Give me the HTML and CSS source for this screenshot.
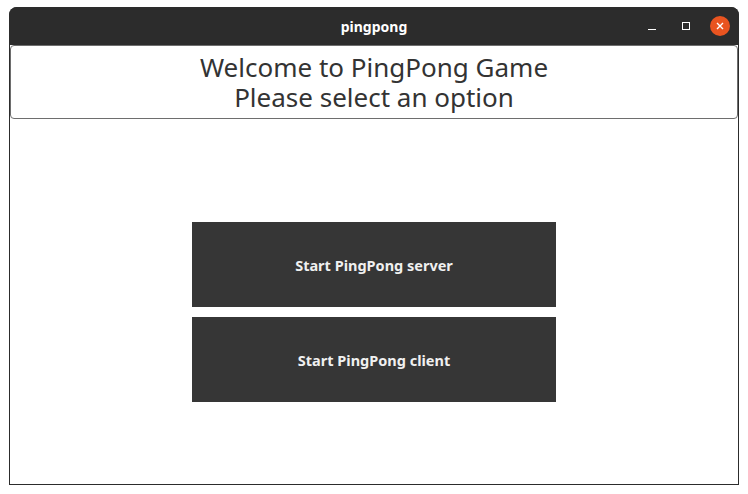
FILE: index.html
```html
<!DOCTYPE html>
<html>
<head>
<meta charset="utf-8">
<link rel="stylesheet" href="styles.css">
</head>
<body>
<div class="window">
  <div class="titlebar">
    <span class="title">pingpong</span>
    <div class="controls">
      <span class="ctl min"><svg width="10" height="10" viewBox="0 0 10 10"><line x1="1" y1="8.5" x2="9" y2="8.5" stroke="#fff" stroke-width="1"/></svg></span>
      <span class="ctl max"><svg width="10" height="10" viewBox="0 0 10 10"><rect x="1.5" y="1.5" width="7" height="7" fill="none" stroke="#fff" stroke-width="1"/></svg></span>
      <span class="ctl close"><svg width="10" height="10" viewBox="0 0 10 10"><path d="M2 2 L8 8 M8 2 L2 8" stroke="#fff" stroke-width="1.4"/></svg></span>
    </div>
  </div>
  <div class="content">
    <div class="header">
      <div class="line">Welcome to PingPong Game</div>
      <div class="line">Please select an option</div>
    </div>
    <div class="buttons">
      <button class="btn">Start PingPong server</button>
      <button class="btn">Start PingPong client</button>
    </div>
  </div>
</div>
</body>
</html>
```
FILE: styles.css
```css
html, body {
  margin: 0;
  padding: 0;
  background: #ffffff;
}
body {
  padding: 7px 9px 0 9px;
  font-family: "Noto Sans", "Open Sans", sans-serif;
}
.window {
  width: 730px;
  height: 478px;
  box-sizing: border-box;
  display: flex;
  flex-direction: column;
  border-radius: 8px 8px 0 0;
  overflow: hidden;
  background: #2c2c2c;
}
.titlebar {
  height: 38px;
  flex: none;
  position: relative;
  display: flex;
  align-items: center;
  justify-content: center;
  background: #2c2c2c;
}
.title {
  color: #ffffff;
  font-weight: bold;
  font-size: 14px;
}
.controls {
  position: absolute;
  right: 9px;
  top: 0;
  height: 38px;
  display: flex;
  align-items: center;
  gap: 14px;
}
.ctl {
  width: 20px;
  height: 20px;
  display: flex;
  align-items: center;
  justify-content: center;
}
.close {
  background: #e95420;
  border-radius: 50%;
}
.content {
  flex: 1;
  background: #ffffff;
  margin: 0 1px 1px 1px;
  display: flex;
  flex-direction: column;
}
.header {
  height: 74px;
  box-sizing: border-box;
  border: 1px solid #6e6e6e;
  border-radius: 4px;
  display: flex;
  flex-direction: column;
  align-items: center;
  justify-content: center;
  font-size: 26px;
  color: #333333;
}
.line {
  height: 30px;
  line-height: 30px;
}
.buttons {
  display: flex;
  flex-direction: column;
  align-items: center;
  gap: 10px;
  padding-top: 103px;
}
.btn {
  width: 364px;
  height: 85px;
  border: none;
  background: #363636;
  color: #f0f0f0;
  font-family: "Noto Sans", "Open Sans", sans-serif;
  font-weight: bold;
  font-size: 14.5px;
  padding: 0;
  margin: 0;
}
```
